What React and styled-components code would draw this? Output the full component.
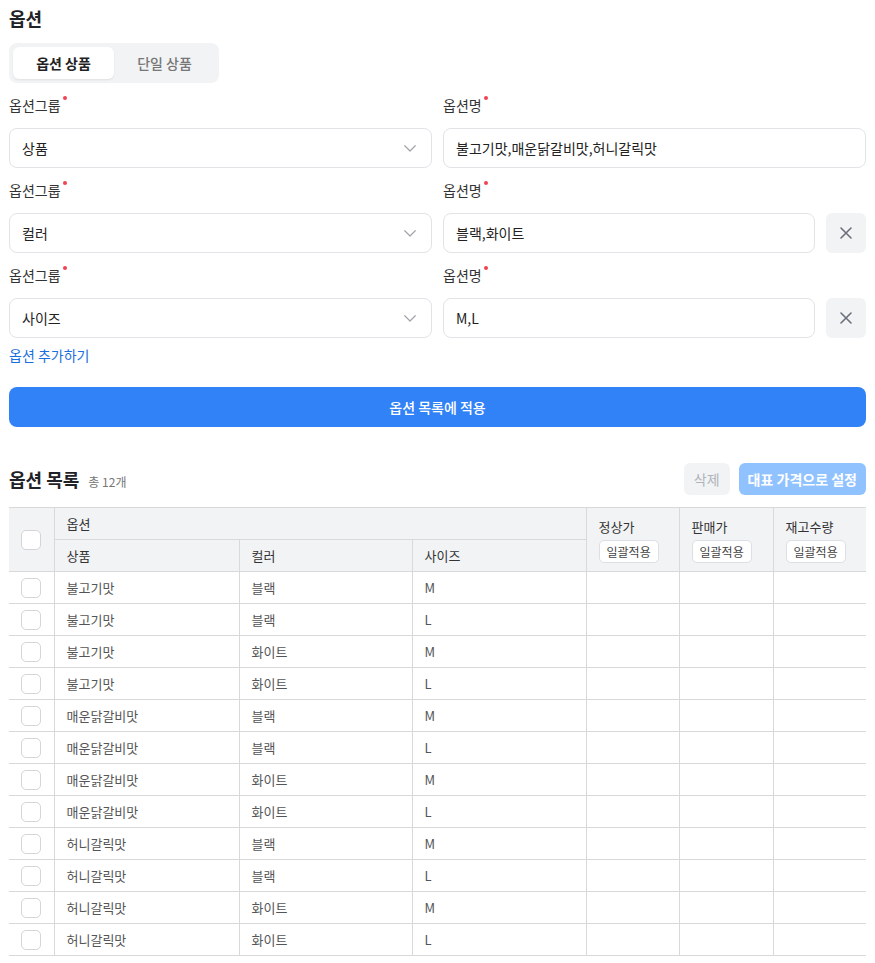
import styled, { createGlobalStyle } from "styled-components"

const Global = createGlobalStyle`
    body {
        margin: 0;
        background: #ffffff;
        font-family: "Noto Sans CJK KR", "Noto Sans", sans-serif;
        color: #222;
    }
    * { box-sizing: border-box; }
`

const Page = styled.div`
    padding: 4px 9px 8px;
`

const Title = styled.h2`
    margin: 0;
    font-size: 18px;
    font-weight: 700;
    line-height: 28px;
    color: #1f2328;
`

const Tabs = styled.div`
    display: flex;
    width: 210px;
    margin-top: 11px;
    padding: 4px;
    border-radius: 8px;
    background: #f2f3f5;
`

const Tab = styled.button`
    flex: 1;
    height: 32px;
    border: none;
    border-radius: 6px;
    font-family: inherit;
    font-size: 14px;
    font-weight: ${p => p.$active ? 700 : 500};
    color: ${p => p.$active ? "#222" : "#777"};
    background: ${p => p.$active ? "#fff" : "transparent"};
    box-shadow: ${p => p.$active ? "0 1px 2px rgba(0,0,0,0.08)" : "none"};
`

const OptionRow = styled.div`
    display: grid;
    grid-template-columns: 1fr 1fr;
    column-gap: 11px;
    margin-top: 12px;
`

const Field = styled.div`
    display: flex;
    flex-direction: column;
`

const Label = styled.div`
    position: relative;
    align-self: flex-start;
    font-size: 14px;
    line-height: 20px;
    color: #333;
    margin-bottom: 13px;
    &::after {
        content: "";
        position: absolute;
        top: 1px;
        right: -6px;
        width: 4px;
        height: 4px;
        border-radius: 50%;
        background: #ef4452;
    }
`

const InputLine = styled.div`
    display: flex;
    gap: 11px;
`

const Box = styled.div`
    flex: 1;
    display: flex;
    align-items: center;
    justify-content: space-between;
    height: 40px;
    padding: 0 12px;
    border: 1px solid #e1e3e6;
    border-radius: 8px;
    font-size: 14px;
    color: #222;
    background: #fff;
`

const RemoveBtn = styled.button`
    width: 40px;
    height: 40px;
    flex: none;
    border: none;
    border-radius: 6px;
    background: #f2f3f5;
    display: flex;
    align-items: center;
    justify-content: center;
`

const AddLink = styled.div`
    margin-top: 7px;
    font-size: 14px;
    line-height: 20px;
    color: #1b6fdc;
`

const ApplyBtn = styled.button`
    width: 100%;
    height: 40px;
    margin-top: 22px;
    border: none;
    border-radius: 8px;
    background: #3182f6;
    color: #fff;
    font-family: inherit;
    font-size: 14px;
    font-weight: 500;
`

const ListHead = styled.div`
    display: flex;
    align-items: center;
    justify-content: space-between;
    margin-top: 36px;
`

const ListTitle = styled.div`
    display: flex;
    align-items: baseline;
    gap: 9px;
`

const Count = styled.span`
    font-size: 12px;
    color: #777;
`

const Actions = styled.div`
    display: flex;
    gap: 9px;
`

const SmallBtn = styled.button`
    height: 32px;
    padding: 0 ${p => p.$primary ? "9px" : "10px"};
    border: none;
    border-radius: 6px;
    font-family: inherit;
    font-size: 14px;
    font-weight: ${p => p.$primary ? 600 : 400};
    color: ${p => p.$primary ? "#fff" : "#b0b4ba"};
    background: ${p => p.$primary ? "#90c2ff" : "#f2f3f5"};
`

const Table = styled.table`
    width: 100%;
    margin-top: 12px;
    border-collapse: collapse;
    table-layout: fixed;
    font-size: 13px;
    color: #555;
`

const Th = styled.th`
    height: 32px;
    padding: 0 12px;
    text-align: ${p => p.$center ? "center" : "left"};
    font-weight: 400;
    color: #333;
    background: #f2f3f5;
    border-top: 1px solid #d9d9d9;
    border-bottom: 1px solid #d9d9d9;
    border-left: ${p => p.$noLeft ? "none" : "1px solid #d9d9d9"};
    vertical-align: middle;
`

const PriceHead = styled.div`
    display: flex;
    flex-direction: column;
    align-items: flex-start;
    gap: 4px;
`

const BulkBtn = styled.span`
    display: inline-block;
    padding: 2px 7px;
    border: 1px solid #dcdfe3;
    border-radius: 5px;
    background: #fff;
    font-size: 12px;
    color: #444;
`

const Td = styled.td`
    height: 32px;
    padding: 0 12px;
    border-bottom: 1px solid #d9d9d9;
    border-left: ${p => p.$noLeft ? "none" : "1px solid #d9d9d9"};
    text-align: ${p => p.$center ? "center" : "left"};
`

const Check = styled.span`
    display: inline-block;
    width: 20px;
    height: 20px;
    border: 1.5px solid #d3d5d8;
    border-radius: 5px;
    background: #fff;
    vertical-align: middle;
`

const Chevron = () => (
    <svg width="18" height="18" viewBox="0 0 24 24" fill="none" stroke="#a0a4aa" strokeWidth="1.6" strokeLinecap="round" strokeLinejoin="round">
        <path d="M5 9l7 7 7-7" />
    </svg>
)

const Close = () => (
    <svg width="16" height="16" viewBox="0 0 16 16" fill="none" stroke="#6b7078" strokeWidth="1.6" strokeLinecap="round">
        <path d="M3 3l10 10M13 3L3 13" />
    </svg>
)

const groups = [
    { group: "상품", names: "불고기맛,매운닭갈비맛,허니갈릭맛", removable: false },
    { group: "컬러", names: "블랙,화이트", removable: true },
    { group: "사이즈", names: "M,L", removable: true },
]

const products = ["불고기맛", "매운닭갈비맛", "허니갈릭맛"]
const colors = ["블랙", "화이트"]
const sizes = ["M", "L"]
const rows = []
products.forEach(p => colors.forEach(c => sizes.forEach(s => rows.push([p, c, s]))))

const App = () => {
    return <>
        <Global />
        <Page>
            <Title>옵션</Title>
            <Tabs>
                <Tab $active>옵션 상품</Tab>
                <Tab>단일 상품</Tab>
            </Tabs>
            {
                groups.map(g => (
                    <OptionRow key={g.group}>
                        <Field>
                            <Label>옵션그룹</Label>
                            <Box>{g.group}<Chevron /></Box>
                        </Field>
                        <Field>
                            <Label>옵션명</Label>
                            <InputLine>
                                <Box>{g.names}</Box>
                                {g.removable && <RemoveBtn><Close /></RemoveBtn>}
                            </InputLine>
                        </Field>
                    </OptionRow>
                ))
            }
            <AddLink>옵션 추가하기</AddLink>
            <ApplyBtn>옵션 목록에 적용</ApplyBtn>

            <ListHead>
                <ListTitle>
                    <Title as="div">옵션 목록</Title>
                    <Count>총 12개</Count>
                </ListTitle>
                <Actions>
                    <SmallBtn>삭제</SmallBtn>
                    <SmallBtn $primary>대표 가격으로 설정</SmallBtn>
                </Actions>
            </ListHead>

            <Table>
                <colgroup>
                    <col style={{ width: 45 }} />
                    <col style={{ width: 185 }} />
                    <col style={{ width: 173 }} />
                    <col style={{ width: 174 }} />
                    <col style={{ width: 93 }} />
                    <col style={{ width: 94 }} />
                    <col style={{ width: 93 }} />
                </colgroup>
                <thead>
                    <tr>
                        <Th rowSpan={2} $noLeft $center><Check /></Th>
                        <Th colSpan={3}>옵션</Th>
                        {["정상가", "판매가", "재고수량"].map(h => (
                            <Th key={h} rowSpan={2}>
                                <PriceHead>{h}<BulkBtn>일괄적용</BulkBtn></PriceHead>
                            </Th>
                        ))}
                    </tr>
                    <tr>
                        <Th>상품</Th>
                        <Th>컬러</Th>
                        <Th>사이즈</Th>
                    </tr>
                </thead>
                <tbody>
                    {
                        rows.map((r, i) => (
                            <tr key={i}>
                                <Td $noLeft $center><Check /></Td>
                                <Td>{r[0]}</Td>
                                <Td>{r[1]}</Td>
                                <Td>{r[2]}</Td>
                                <Td />
                                <Td />
                                <Td />
                            </tr>
                        ))
                    }
                </tbody>
            </Table>
        </Page>
    </>
}

export default App
